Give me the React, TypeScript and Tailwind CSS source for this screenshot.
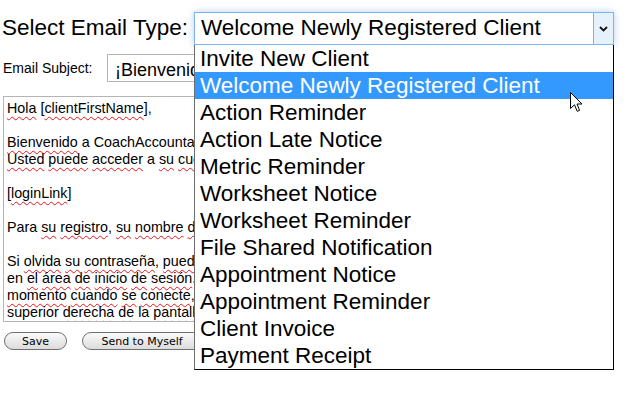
import React from "react";

const items = [
  "Invite New Client",
  "Welcome Newly Registered Client",
  "Action Reminder",
  "Action Late Notice",
  "Metric Reminder",
  "Worksheet Notice",
  "Worksheet Reminder",
  "File Shared Notification",
  "Appointment Notice",
  "Appointment Reminder",
  "Client Invoice",
  "Payment Receipt",
];

const lines = [
  "~Hola [~clientFirstName],",
  "",
  "~Bienvenido a CoachAccountable! ~Estamos ~encantados ~de ~tenerle.",
  "~Usted ~puede ~acceder a ~su ~cuenta ~en ~cualquier ~momento ~en:",
  "",
  "[~loginLink]",
  "",
  "Para ~su ~registro, ~su ~nombre ~de ~usuario es: [~username]",
  "",
  "Si ~olvida ~su ~contraseña, ~puede ~restablecerla ~fácilmente",
  "en ~el ~área ~de ~inicio ~de ~sesión. ~Puede ~cambiar ~su ~contraseña",
  "~momento ~cuando ~se ~conecte, ~haciendo ~clic ~en Mi ~Cuenta ~en la ~parte",
  "superior ~derecha ~de la ~pantalla.",
];

function Line({ s }: { s: string }) {
  const parts = s.split(" ");
  return (
    <div className="h-[17px] whitespace-pre">
      {s === ""
        ? "\u00a0"
        : parts.map((p, i) => {
            const sp = i < parts.length - 1 ? " " : "";
            const idx = p.indexOf("~");
            if (idx >= 0) {
              const pre = p.slice(0, idx);
              const rest = p.slice(idx + 1);
              const m = rest.match(/^(.*?)([^\p{L}]*)$/u);
              const word = m ? m[1] : rest;
              const post = m ? m[2] : "";
              return (
                <span key={i}>
                  {pre}
                  <span className="underline decoration-wavy decoration-[#e8141b] decoration-1 underline-offset-[3px]">
                    {word}
                  </span>
                  {post}
                  {sp}
                </span>
              );
            }
            return (
              <span key={i}>
                {p}
                {sp}
              </span>
            );
          })}
    </div>
  );
}

export default function App() {
  return (
    <div className="relative w-[629px] h-[405px] overflow-hidden bg-white text-black font-['Liberation_Sans',Arial,sans-serif]">
      {/* Select row */}
      <div className="flex items-center mt-[12px] h-[33px]">
        <span className="ml-[2px] w-[192px] text-[22.5px] leading-none whitespace-nowrap">Select Email Type:</span>
        <div className="flex h-[33px] w-[420px] border border-[#7eb4ea] shadow-[0_0_7px_rgba(120,170,230,0.55)] bg-white">
          <div className="flex-1 flex items-center pl-[6px] text-[22.5px] leading-none whitespace-nowrap">
            Welcome Newly Registered Client
          </div>
          <div className="w-[20px] flex items-center justify-center bg-[#e5f1fb] border-l border-[#7eb4ea]">
            <svg width="9" height="6" viewBox="0 0 9 6">
              <path d="M1 1 L4.5 4.5 L8 1" fill="none" stroke="#111" strokeWidth="1.8" />
            </svg>
          </div>
        </div>
      </div>

      {/* Subject row */}
      <div className="flex items-center mt-[9px] h-[28px]">
        <span className="ml-[3px] w-[104px] text-[14px] leading-none">Email Subject:</span>
        <div className="h-[28px] w-[420px] border border-[#b4b4b4] pl-[7px] pt-[3px] flex items-center text-[18px] leading-none whitespace-nowrap overflow-hidden">
          ¡Bienvenido a CoachAccountable!
        </div>
      </div>

      {/* Textarea */}
      <div className="mt-[14px] ml-[3px] w-[430px] h-[226px] border border-[#b4b4b4] pl-[3px] pt-[3px] text-[14.3px] leading-[17px] overflow-hidden">
        {lines.map((l, i) => (
          <Line key={i} s={l} />
        ))}
      </div>

      {/* Buttons */}
      <div className="flex mt-[10px] ml-[4px] gap-[15px] font-['DejaVu_Sans',Verdana,sans-serif] text-[11px]">
        <div className="w-[63px] h-[18px] rounded-full border border-[#707070] bg-gradient-to-b from-[#fafafa] to-[#dcdcdc] flex items-center justify-center leading-none">
          Save
        </div>
        <div className="w-[120px] h-[18px] rounded-full border border-[#707070] bg-gradient-to-b from-[#fafafa] to-[#dcdcdc] flex items-center justify-center leading-none">
          Send to Myself
        </div>
      </div>

      {/* Dropdown list */}
      <div className="absolute left-[194px] top-[45px] w-[420px] bg-white border border-t-0 border-black border-l-[#6e6e6e]">
        {items.map((it, i) => (
          <div
            key={it}
            className={
              i === 1
                ? "h-[27px] leading-[27px] pl-[5px] text-[22.5px] bg-[#3399ff] text-white whitespace-nowrap"
                : "h-[27px] leading-[27px] pl-[5px] text-[22.5px] text-black whitespace-nowrap"
            }
          >
            {it}
          </div>
        ))}
      </div>

      {/* Mouse cursor */}
      <svg className="absolute left-[570px] top-[92px]" width="13" height="21" viewBox="0 0 13 21">
        <polygon
          points="0.5,0.5 0.5,16.5 4.5,12.8 7.2,19.3 9.6,18.3 7,12 12,12"
          fill="#fff"
          stroke="#000"
          strokeWidth="1"
          strokeLinejoin="miter"
        />
      </svg>
    </div>
  );
}
